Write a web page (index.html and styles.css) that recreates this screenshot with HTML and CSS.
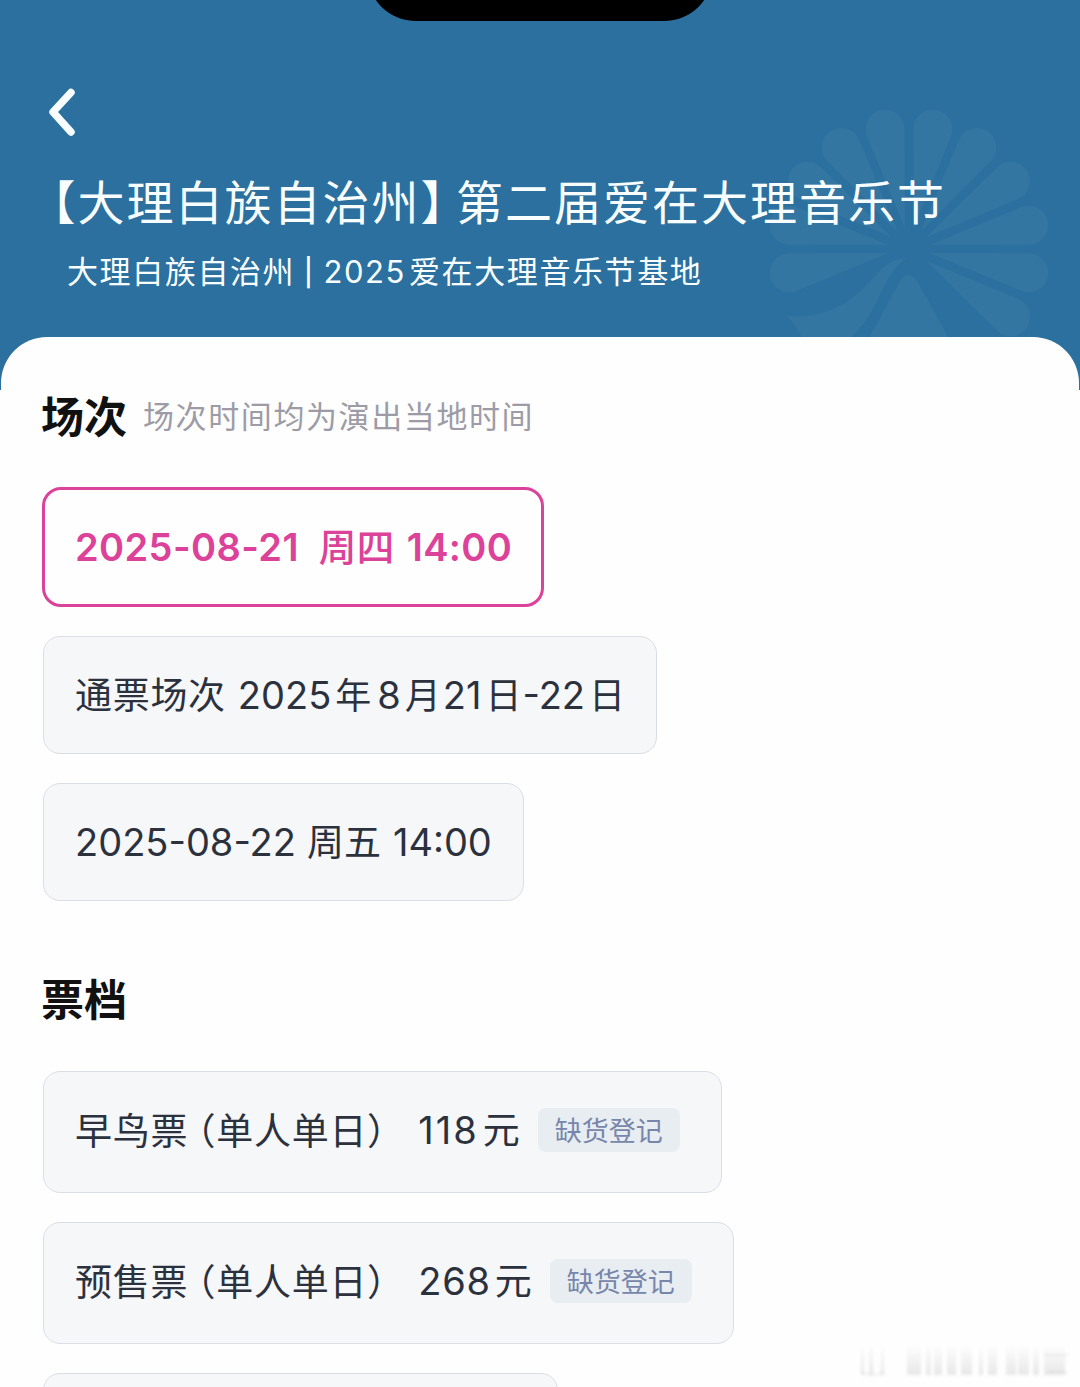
FILE: index.html
```html
<!DOCTYPE html>
<html lang="zh-CN">
<head>
    <meta charset="UTF-8">
    <meta name="viewport" content="width=device-width, initial-scale=1.0">
    <title>第二届爱在大理音乐节</title>
    <link rel="stylesheet" href="styles.css">
</head>
<body>
    <div class="page">
        <div class="header">
            <div class="island"></div>
            <svg class="flower" width="282" height="232" viewBox="-141 -141 282 232">
                <defs>
                    <path id="petal" d="M0-21L-19.1-118.2A19.5 19.5 0 1 1 19.1-118.2Z"/>
                </defs>
                <use href="#petal" transform="rotate(-101.25)"/>
                <use href="#petal" transform="rotate(-78.75)"/>
                <use href="#petal" transform="rotate(-56.25)"/>
                <use href="#petal" transform="rotate(-33.75)"/>
                <use href="#petal" transform="rotate(-11.25)"/>
                <use href="#petal" transform="rotate(11.25)"/>
                <use href="#petal" transform="rotate(33.75)"/>
                <use href="#petal" transform="rotate(56.25)"/>
                <use href="#petal" transform="rotate(78.75)"/>
                <use href="#petal" transform="rotate(101.25)"/>
                <use href="#petal" transform="rotate(123.75)"/>
                <path d="M-2 9C-16 10-23 15-32 25C-54 50-78 70-122 67C-115 74-110 82-106 91H-61C-48 80-39 67-30 48C-22 31-15 17-2 9Z"/>
                <path d="M-41 91L-9 32Q-1 20 8 32L41 91Z"/>
            </svg>
            <svg class="back" width="34" height="54" viewBox="0 0 34 54">
                <path d="M25 7.5L7 27L25 47"/>
            </svg>
            <h1 class="title"><span class="bracket">【大理白族自治州】</span>第二届爱在大理音乐节</h1>
            <div class="venue">大理白族自治州 <span class="bar">|</span> <span class="year">2025</span>爱在大理音乐节基地</div>
        </div>

        <div class="sheet">
            <div class="section-head">
                <h2>场次</h2>
                <span class="hint">场次时间均为演出当地时间</span>
            </div>
            <div class="options">
                <div class="option active"><span class="day">2025-08-21</span><span class="week">周四</span><span>14:00</span></div>
                <div class="option range"><span class="name">通票场次</span><span>2025</span><span class="unit">年</span><span>8</span><span class="unit">月</span><span>21</span><span class="unit">日</span><span>-22</span><span class="unit">日</span></div>
                <div class="option"><span class="day">2025-08-22</span><span class="week">周五</span><span>14:00</span></div>
            </div>

            <div class="section-head tickets-head">
                <h2>票档</h2>
            </div>
            <div class="options">
                <div class="option ticket"><span class="name">早鸟票<span class="paren">（</span>单人单日）</span><span class="price early">118<b>元</b></span><span class="tag">缺货登记</span></div>
                <div class="option ticket"><span class="name">预售票<span class="paren">（</span>单人单日）</span><span class="price">268<b>元</b></span><span class="tag">缺货登记</span></div>
                <div class="option ticket next"></div>
            </div>
        </div>

        <svg class="watermark" width="220" height="44" viewBox="0 0 220 44">
            <defs>
                <linearGradient id="fade" x1="0" y1="0" x2="0" y2="44" gradientUnits="userSpaceOnUse">
                    <stop offset="0.1" stop-color="#999" stop-opacity="0"/>
                    <stop offset="0.8" stop-color="#999" stop-opacity="0.32"/>
                </linearGradient>
            </defs>
            <g fill="url(#fade)">
                <rect x="1" y="4" width="3" height="31"/>
                <rect x="9" y="4" width="4" height="31"/>
                <rect x="21" y="4" width="3" height="31"/>
                <rect x="47" y="6" width="14" height="29"/>
                <rect x="66" y="6" width="5" height="29"/>
                <rect x="74" y="6" width="8" height="29"/>
                <rect x="87" y="6" width="9" height="29"/>
                <rect x="101" y="6" width="11" height="29"/>
                <rect x="119" y="6" width="4" height="29"/>
                <rect x="128" y="6" width="9" height="29"/>
                <rect x="146" y="6" width="10" height="29"/>
                <rect x="158" y="6" width="11" height="29"/>
                <rect x="173" y="6" width="6" height="29"/>
                <rect x="184" y="6" width="21" height="29"/>
            </g>
            <path class="watermark-line" d="M1 32Q12 38 24 32M184 15H208M188 32H208"/>
        </svg>
    </div>
</body>
</html>
```
FILE: styles.css
```css
* {
    margin: 0;
    padding: 0;
    box-sizing: border-box;
}

body {
    font-family: Inter, 'Noto Sans CJK SC', sans-serif;
    background-color: #fefefe;
    color: #2b313d;
}

.page {
    position: relative;
    width: 1080px;
    height: 1387px;
    overflow: hidden;
}

.header {
    position: relative;
    height: 390px;
    padding-top: 85px;
    background-color: #2b709e;
    color: #f8feff;
    white-space: nowrap;
}

.island {
    position: absolute;
    top: -77px;
    left: 367px;
    width: 346px;
    height: 98px;
    border-radius: 49px;
    background-color: #000;
}

.flower {
    position: absolute;
    top: 108px;
    left: 768px;
    fill: rgba(255, 255, 255, 0.045);
}

.back {
    display: block;
    margin-left: 46px;
    fill: none;
    stroke: #f8feff;
    stroke-width: 7.5;
    stroke-linecap: round;
    stroke-linejoin: round;
}

.title {
    position: relative;
    margin-top: 29px;
    padding-left: 52px;
    font-size: 47px;
    font-weight: 400;
    line-height: 70px;
    letter-spacing: 2px;
}

/* half-width brackets */
.bracket,
.name {
    font-feature-settings: 'halt';
}

.bracket {
    margin-right: 10px;
}

.venue {
    position: relative;
    margin-top: 11px;
    padding-left: 67px;
    font-size: 31px;
    line-height: 46px;
    letter-spacing: 1.6px;
    word-spacing: -1.7px;
}

.bar {
    font-size: 27px;
    font-weight: 500;
    vertical-align: 1px;
}

.year {
    margin-right: 3px;
}

.sheet {
    position: relative;
    margin: -53px 1px 0;
    padding: 50px 42px 0;
    border-radius: 46px 46px 0 0;
    background-color: #fefefe;
}

.section-head {
    display: flex;
    align-items: center;
    gap: 16px;
    height: 58px;
    margin-left: -2px;
}

.section-head h2 {
    padding-top: 2px;
    color: #111;
    font-size: 43px;
    font-weight: 700;
    line-height: 58px;
}

.hint {
    margin-bottom: 4px;
    color: #9d9ca6;
    font-size: 31px;
    letter-spacing: 1.6px;
}

.tickets-head {
    margin-top: 69px;
}

.options {
    display: flex;
    flex-direction: column;
    align-items: flex-start;
    gap: 29px;
    margin-top: 43px;
}

.option {
    display: flex;
    align-items: center;
    height: 118px;
    padding: 0 31px;
    border: 1px solid #dcdee6;
    border-radius: 17px;
    background-color: #f6f7f9;
    font-size: 38px;
    line-height: 54px;
    white-space: nowrap;
}

.option.active {
    height: 120px;
    margin: -1px 0 0 -1px;
    padding: 0 29px 0 30px;
    border: 3px solid #dc4299;
    border-radius: 19px;
    background-color: #fefefe;
    color: #dc4299;
    font-weight: 600;
    letter-spacing: 0.4px;
}

.week {
    margin: 2px 12px 0 11px;
    font-size: 37px;
}

.active .week {
    margin-left: 20px;
    font-size: 37.5px;
    font-weight: 500;
}

.name {
    margin-right: 12px;
    font-size: 37px;
    letter-spacing: 0.7px;
}

.range .name {
    margin-top: 2px;
}

.unit {
    margin: 2px 4px 0;
    font-size: 36px;
}

.unit:nth-of-type(3) {
    margin-right: 6px;
}

.unit:nth-of-type(5) {
    margin-right: 2px;
}

.unit:nth-of-type(7) {
    margin-right: 1px;
}

.unit:last-child {
    margin-right: 0;
}

.ticket {
    height: 122px;
    padding-right: 41px;
}

.ticket .name {
    margin-right: 32px;
}

.paren {
    margin-left: 9px;
}

.price {
    margin-bottom: 3px;
    letter-spacing: 0.7px;
}

.price.early {
    letter-spacing: 2px;
}

.price b {
    margin-left: 4px;
    font-size: 37px;
    font-weight: 400;
    letter-spacing: 0;
}

.tag {
    height: 44px;
    margin: 0 0 5px 18px;
    padding: 0 17px;
    border-radius: 8px;
    background-color: #e8edf2;
    color: #7786aa;
    font-size: 27px;
    line-height: 48px;
}

.next {
    width: 515px;
}

.watermark {
    position: absolute;
    right: 0;
    bottom: 3px;
    opacity: 0.7;
    filter: blur(1.5px);
}

.watermark-line {
    fill: none;
    stroke: #999;
    stroke-opacity: 0.4;
}
```
